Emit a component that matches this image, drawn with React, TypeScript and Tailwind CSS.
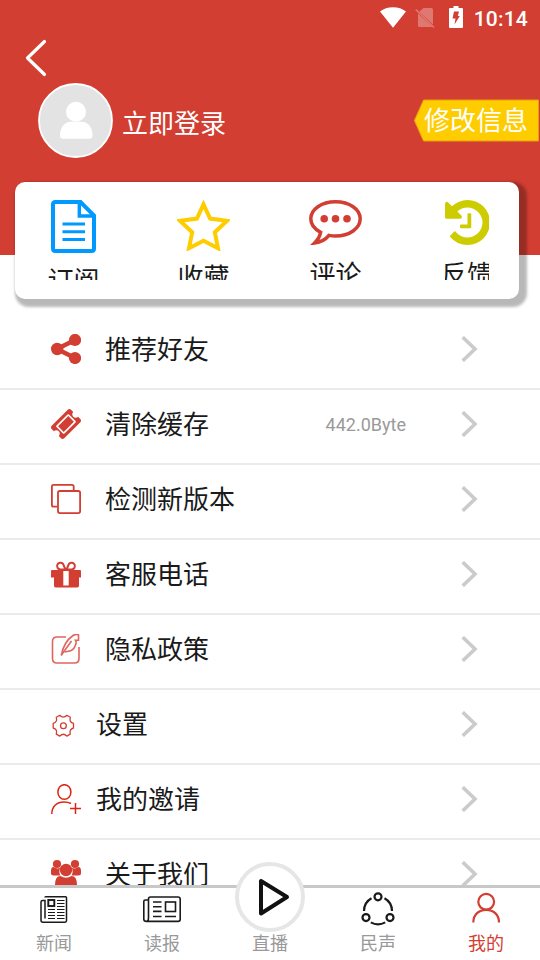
import type { ReactNode } from "react";

interface Shortcut {
  label: string;
  icon: ReactNode;
  className: string;
  labelClassName: string;
}

interface MenuItem {
  label: string;
  icon: ReactNode;
  value?: string;
  tight?: boolean;
}

interface Tab {
  label: string;
  icon: ReactNode;
  active?: boolean;
}

const RED = "#d23e32";

function StatusBar() {
  return (
    <div className="flex h-9 items-start justify-end pr-3">
      <svg className="mt-[7px]" width="26" height="21" viewBox="0 0 26 21" fill="#fff">
        <path d="M0 4.6C3.5 1.700 8 .2 13 .2s9.500 1.500 13 4.400L13 20.800z" />
      </svg>
      <svg className="ml-[9px] mt-[7px]" width="20" height="22" viewBox="0 0 20 22">
        <g opacity="0.3">
          <path d="M8.500 1H16a2 2 0 0 1 2 2v14.500L4.300 4.800zM3 6.500l14.500 13.400H4.500A1.500 1.500 0 0 1 3 18.400z" fill="#fff" />
          <path d="M.8 2.500l18.200 18" stroke="#fff" strokeWidth="1.700" />
        </g>
      </svg>
      <svg className="ml-[14px] mt-[6px]" width="14" height="22" viewBox="0 0 14 22">
        <path d="M4.500 0h5v2H13a1 1 0 0 1 1 1v18a1 1 0 0 1-1 1H1a1 1 0 0 1-1-1V3a1 1 0 0 1 1-1h3.500z" fill="#fff" />
        <path d="M5 5.500h5L8.800 10h2L5.500 18.500 6.500 12.500H3.500z" fill={RED} />
      </svg>
      <span className="ml-[11px] mt-[7px] font-[Roboto] text-[21px] font-medium leading-6 tracking-[0.2px] text-white">
        10:14
      </span>
    </div>
  );
}

function Profile() {
  return (
    <div className="flex items-center pl-[38px] pt-[6px]">
      <svg width="75" height="75" viewBox="0 0 75 75">
        <circle cx="37.500" cy="37.500" r="36.500" fill="#e3e3e3" stroke="#fff" strokeWidth="1.800" />
        <circle cx="38" cy="28.700" r="10" fill="#fff" />
        <path d="M22 52.500c0-8 4.500-13.700 11-13.700h10.500c6.500 0 11 5.700 11 13.700 0 2-1 3.300-3 3.300H25c-2 0-3-1.300-3-3.300z" fill="#fff" />
      </svg>
      <span className="ml-[9px] mt-[3px] text-[26px] leading-none text-white">立即登录</span>
      <button type="button" className="relative ml-auto h-[43px] w-[126px] pb-[3px] pl-[10px] text-left text-[26px] leading-none text-white">
        <svg className="absolute inset-0" width="126" height="43" viewBox="0 0 126 43">
          <path d="M9.500 1H124.500v41H9.500L.4 21.500z" fill="#fc0" stroke="#eb9d0f" strokeWidth="1" />
        </svg>
        <span className="relative">修改信息</span>
      </button>
    </div>
  );
}

const shortcuts: Shortcut[] = [
  {
    label: "订阅",
    className: "ml-[32px] w-[53px]",
    labelClassName: "mt-[12px]",
    icon: (
      <svg className="shrink-0" width="45" height="53" viewBox="0 0 45 53" fill="none" stroke="#09f">
        <path d="M29.500 2H4.500Q2 2 2 4.500v44Q2 51 4.500 51h36q2.500 0 2.500-2.500V15.500z" strokeWidth="4" />
        <path d="M28.300 2v14h15" strokeWidth="3.400" />
        <path d="M11.500 24h22.500M11.500 31.800h22.500M11.500 39.500h22.500" strokeWidth="3" />
      </svg>
    ),
  },
  {
    label: "收藏",
    className: "ml-[77px] w-[53px]",
    labelClassName: "mt-[11px]",
    icon: (
      <svg className="shrink-0" width="53" height="51" viewBox="0 0 53 51" fill="none" stroke="#fc0">
        <path d="M26.500 4.300l6.600 14.300 17 2.200-12.300 11.400 3.200 16-14.500-7.500-14.500 7.500 3.200-16L2.900 20.800l17-2.200z" strokeWidth="4" />
      </svg>
    ),
  },
  {
    label: "评论",
    className: "ml-[79px] w-[53px]",
    labelClassName: "mt-[14px]",
    icon: (
      <svg className="shrink-0" width="53" height="45" viewBox="0 0 53 45" fill={RED}>
        <path
          d="M26.500 1.800C12.500 1.800 1.800 9.300 1.800 18.800c0 5.700 3.600 10.300 9.800 13.600-.8 4.200-2.800 7.500-6 10.600 6.200-.8 11-3.400 14.400-7.600 2 .4 4.200.6 6.500.6 14 0 24.700-7.700 24.700-17.200S40.500 1.800 26.500 1.800z"
          fill="none"
          stroke={RED}
          strokeWidth="3.500"
        />
        <circle cx="15.200" cy="18.800" r="3.800" />
        <circle cx="26.500" cy="18.800" r="3.800" />
        <circle cx="38" cy="18.800" r="3.800" />
      </svg>
    ),
  },
  {
    label: "反馈",
    className: "ml-[83px] w-[44px]",
    labelClassName: "mt-[14px]",
    icon: (
      <svg className="shrink-0" width="45" height="45" viewBox="128 128 1536 1536" fill="#cc0">
        <path d="M1664 896q0 156-61 298t-164 245-245 164-298 61q-172 0-327-72.500t-264-204.500q-7-10-6.500-22.500t8.500-20.500l137-138q10-9 25-9 16 2 23 12 73 95 179 147t225 52q104 0 198.500-40.500t163.500-109.500 109.500-163.500 40.500-198.500-40.500-198.500-109.500-163.500-163.500-109.500-198.500-40.500q-98 0-188 35.500t-160 101.500l137 138q31 30 14 69-17 40-59 40h-448q-26 0-45-19t-19-45v-448q0-42 40-59 39-17 69 14l130 129q107-101 244.500-156.500t284.500-55.500q156 0 298 61t245 164 164 245 61 298zm-640-288v448q0 14-9 23t-23 9h-320q-14 0-23-9t-9-23v-64q0-14 9-23t23-9h224v-352q0-14 9-23t23-9h64q14 0 23 9t9 23z" />
      </svg>
    ),
  },
];

function ShortcutCard() {
  return (
    <div className="relative mx-[15px] -mt-[73px] mr-[21px] flex h-[117px] rounded-[10px] bg-white pt-[18px] shadow-[4px_4px_3px_4px_rgba(0,0,0,0.28)]">
      {shortcuts.map((s) => (
        <div key={s.label} className={`flex h-[80px] shrink-0 flex-col items-center overflow-hidden ${s.className}`}>
          {s.icon}
          <span className={`shrink-0 whitespace-nowrap text-[26px] leading-[27px] ${s.labelClassName}`}>{s.label}</span>
        </div>
      ))}
    </div>
  );
}

const menu: MenuItem[] = [
  {
    label: "推荐好友",
    icon: (
      <svg width="30" height="30" viewBox="0 0 30 30" fill={RED}>
        <path d="M24 6L6 15l18 9" fill="none" stroke={RED} strokeWidth="4.500" />
        <circle cx="6.200" cy="15" r="6.200" />
        <circle cx="24" cy="6" r="6.100" />
        <circle cx="24" cy="24" r="6.100" />
      </svg>
    ),
  },
  {
    label: "清除缓存",
    value: "442.0Byte",
    icon: (
      <svg width="30" height="30" viewBox="53 53 1686 1686" fill={RED}>
        <path d="M1024 452l316 316-572 572-316-316zm-211 979l618-618q19-19 19-45t-19-45l-362-362q-18-18-45-18t-45 18l-618 618q-19 19-19 45t19 45l362 362q18 18 45 18t45-18zm889-637l-907 908q-37 37-90.500 37t-90.500-37l-126-125q56-56 56-136t-56-136-136-56-136 56l-125-126q-37-37-37-90.500t37-90.500l907-906q37-37 90.500-37t90.500 37l125 125q-56 56-56 136t56 136 136 56 136-56l126 125q37 37 37 90.500t-37 90.500z" />
      </svg>
    ),
  },
  {
    label: "检测新版本",
    icon: (
      <svg width="30" height="30" viewBox="0 0 30 30" fill="none" stroke={RED} strokeWidth="1.800">
        <path d="M22.700 6V2.500Q22.700.9 21 .9H2.500Q.9.9.9 2.500V21q0 1.700 1.600 1.700H6" />
        <rect x="7" y="7" width="22.100" height="22.100" rx="1.800" />
      </svg>
    ),
  },
  {
    label: "客服电话",
    icon: (
      <svg width="30" height="30" viewBox="0 0 30 30" fill={RED}>
        <path d="M1 11h28q1 0 1 1v6.500h-2v8.300q0 1.700-1.700 1.700H4.700Q3 28.500 3 26.800v-8.300H0V12q0-1 1-1z" />
        <path d="M12.300 12h5.400v14.500h-5.400z" fill="#fff" />
        <path d="M14.500 10.500H9.300a3.400 3.400 0 1 1 2.600-5.800zM15.500 10.500h5.200a3.400 3.400 0 1 0-2.600-5.800z" fill="none" stroke={RED} strokeWidth="2" />
      </svg>
    ),
  },
  {
    label: "隐私政策",
    icon: (
      <svg width="30" height="30" viewBox="0 0 30 30" fill="none" stroke="#df665c" strokeWidth="1.600">
        <path d="M15 3H6Q1.500 3 1.500 7.500v17Q1.500 29 6 29h17.500q4.500 0 4.500-4.500V13" />
        <path d="M10.500 21C12 12 17 5 22 1.500q3-1.500 5.500-.7v5.400h-3q1.500 2-.5 6-1.500 4.500-8 5.300l-2.500.5" />
        <path d="M10 21.500L20.500 7" />
      </svg>
    ),
  },
  {
    label: "设置",
    tight: true,
    icon: (
      <svg width="30" height="30" viewBox="0 0 30 30" fill="none" stroke={RED} strokeWidth="1.300" strokeLinejoin="round">
        <path d="M8.800 6.300Q12.300 10 15.800 6.300l3.500 2Q18 13.300 22.500 14.400v4.600Q18 20.100 19.300 25.100l-3.500 2Q12.300 23.400 8.800 27.100l-3.500-2Q6.600 20.100 2.200 19v-4.600Q6.600 13.300 5.300 8.300z" />
        <circle cx="12.400" cy="16.700" r="2.900" />
      </svg>
    ),
  },
  {
    label: "我的邀请",
    tight: true,
    icon: (
      <svg width="30" height="30" viewBox="0 0 30 30" fill="none" stroke="#dc2414" strokeWidth="1.500">
        <ellipse cx="13.400" cy="8" rx="6.500" ry="7.300" />
        <path d="M.8 30C.8 22.500 5.500 18 13 18q4 0 7 1.500M24.500 19v11M19 24.500h11" />
      </svg>
    ),
  },
  {
    label: "关于我们",
    icon: (
      <svg width="30" height="30" viewBox="0 0 30 30" fill={RED}>
        <circle cx="6" cy="5" r="4.100" />
        <circle cx="24" cy="5" r="4.100" />
        <path d="M0 12q0-4 2.500-4Q6 10.500 9 8.800q-1.500 5 .5 7.700H2.500Q0 16.500 0 14.500zM30 12q0-4-2.500-4Q24 10.500 21 8.800q1.500 5-.5 7.700h7q2.500 0 2.500-2z" />
        <circle cx="15" cy="11" r="6.200" />
        <path d="M4 30V26q0-9 5.500-9Q15 20.500 20.500 17q5.500 0 5.500 9v4z" />
      </svg>
    ),
  },
];

function MenuRow({ item }: { item: MenuItem }) {
  return (
    <li className="flex h-[75px] shrink-0 items-center border-b-2 border-[#ebebeb] pb-[5px] pl-[51px] pr-[62px]">
      {item.icon}
      <span className={`mb-[2px] text-[26px] leading-none ${item.tight ? "ml-[15px]" : "ml-6"}`}>{item.label}</span>
      <span className="ml-auto mt-px font-[Roboto] text-[18px] leading-none text-[#999]">{item.value}</span>
      <svg className="ml-[55px]" width="17" height="26" viewBox="0 0 17 26" fill="none" stroke="#cbcbcb" strokeWidth="3.600">
        <path d="M1.700 1.200L14 13l-12.300 11.800" />
      </svg>
    </li>
  );
}

const tabs: Tab[] = [
  {
    label: "新闻",
    icon: (
      <svg width="28" height="34" viewBox="0 0 28 34" fill="none" stroke="#1a1a1a" strokeWidth="1.500">
        <path d="M5 5.500Q5 4.800 6 4.800h19.500q1 0 1 1v23q0 1.400-1.500 1.400H3q-2 0-2-2V10q0-1.500 1.500-1.500H5v18" />
        <rect x="8.300" y="8" width="6" height="6" strokeWidth="1.900" />
        <path d="M17 8.500h7.500M17 11.500h7.500M17 14.500h7.500M8 17.500h7M17 17.500h7.500M8 20.500h7M17 20.500h7.500M8 23.500h7M17 23.500h7.500M8 26.500h7M17 26.500h7.500" strokeWidth="1.200" />
      </svg>
    ),
  },
  {
    label: "读报",
    icon: (
      <svg width="38" height="34" viewBox="0 0 38 34" fill="none" stroke="#1a1a1a" strokeWidth="1.600">
        <path d="M5.500 8V7q0-2 2-2H35q2.200 0 2.200 2.200v20q0 2.200-2.200 2.200H3.500q-2.700 0-2.700-2.200V9.500q0-1.500 1.500-1.500h3.200v18q0 3.400-2 3.400" />
        <rect x="22.500" y="10" width="10" height="9.500" />
        <path d="M10 10h8.500M10 14.700h8.500M10 19.400h8.500M10 24.500h8.500M22 24.500h11" />
      </svg>
    ),
  },
  { label: "直播", icon: <span className="h-[34px]" /> },
  {
    label: "民声",
    icon: (
      <svg width="34" height="34" viewBox="0 0 34 34" fill="none" stroke="#1a1a1a" strokeWidth="2.200">
        <circle cx="17" cy="4.800" r="3.500" />
        <circle cx="5" cy="25.600" r="3.500" />
        <circle cx="29" cy="25.600" r="3.500" />
        <path d="M10.500 6.300Q3 10.500 3 19M23.500 6.300Q31 10.500 31 19M9.800 30.400q7.200 4 14.400 0" />
      </svg>
    ),
  },
  {
    label: "我的",
    active: true,
    icon: (
      <svg width="28" height="34" viewBox="0 0 28 34" fill="none" stroke={RED} strokeWidth="2.200">
        <circle cx="14.200" cy="9.800" r="7.900" />
        <path d="M1.300 30.500C1.300 22.500 7 17.800 14.200 17.800S27 22.500 27 30.500" />
      </svg>
    ),
  },
];

function TabBar() {
  return (
    <nav className="relative flex h-[75px] shrink-0 border-t-3 border-[#c8c8c8] bg-white">
      {tabs.map((tab) => (
        <div key={tab.label} className="flex flex-1 flex-col items-center pt-[4px]">
          {tab.icon}
          <span className={`mt-[7px] text-[18px] leading-none ${tab.active ? "text-[#d23e32]" : "text-[#999]"}`}>
            {tab.label}
          </span>
        </div>
      ))}
      <button
        type="button"
        aria-label="直播"
        className="absolute -top-[26px] left-[235px] size-[70px] rounded-full border-4 border-[#e6e6e6] bg-white"
      >
        <svg width="62" height="62" viewBox="0 0 62 62" fill="none" stroke="#111" strokeWidth="4" strokeLinejoin="round">
          <path d="M22 15v32.500L48 31z" />
        </svg>
      </button>
    </nav>
  );
}

export default function App() {
  return (
    <div className="flex h-[960px] w-[540px] flex-col overflow-hidden bg-white font-['Noto_Sans_CJK_SC',sans-serif] text-[#1a1a1a]">
      <header className="h-[255px] shrink-0 bg-[#d23e32]">
        <StatusBar />
        <svg className="ml-[25px] mt-[3px]" width="24" height="38" viewBox="0 0 24 38" fill="none" stroke="#fff" strokeWidth="3.200" strokeLinecap="round" strokeLinejoin="round">
          <path d="M19.500 2.500L2.500 19l17 16.500" />
        </svg>
        <Profile />
      </header>
      <ShortcutCard />
      <ul className="mt-4 flex min-h-0 flex-1 flex-col overflow-hidden">
        {menu.map((item) => (
          <MenuRow key={item.label} item={item} />
        ))}
      </ul>
      <TabBar />
    </div>
  );
}
